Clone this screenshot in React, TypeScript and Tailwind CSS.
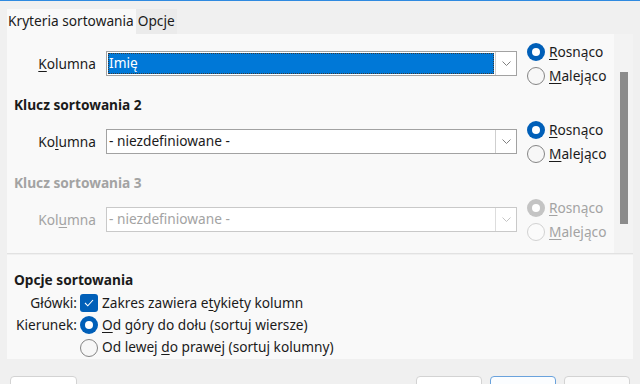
import React from 'react';

const FONT = { fontFamily: '"Noto Sans", "Liberation Sans", sans-serif' };

// underline one letter (mnemonic)
function Mn({ pre = '', key_, post = '' }: { pre?: string; key_: string; post?: string }) {
  return (
    <>
      {pre}
      <span className="underline underline-offset-2 decoration-1">{key_}</span>
      {post}
    </>
  );
}

function Radio({ checked, disabled, children }: { checked?: boolean; disabled?: boolean; children: React.ReactNode }) {
  let circle;
  if (checked) {
    circle = (
      <span className={`w-[18px] h-[18px] rounded-full flex items-center justify-center ${disabled ? 'bg-[#c4c4c4]' : 'bg-[#005fb8]'}`}>
        <span className="w-[8px] h-[8px] rounded-full bg-white" />
      </span>
    );
  } else {
    circle = (
      <span
        className={`w-[18px] h-[18px] rounded-full border ${disabled ? 'border-[#d2d2d2] bg-[#fbfbfb]' : 'border-[#858585] bg-[#f7f7f7]'}`}
      />
    );
  }
  return (
    <div className={`flex items-center h-[24px] gap-[4px] whitespace-nowrap ${disabled ? 'text-[#a3a3a3]' : 'text-[#1b1b1b]'}`}>
      {circle}
      <span>{children}</span>
    </div>
  );
}

function Select({ value, focused, disabled }: { value: string; focused?: boolean; disabled?: boolean }) {
  return (
    <div className={`w-[411px] h-[25px] flex border bg-white ${disabled ? 'border-[#c9c9c9]' : 'border-[#a2a2a2]'}`}>
      <div className="flex-1 p-[1px]">
        <div
          className={`h-full flex items-center pl-[1px] ${
            focused ? 'bg-[#0078d7] text-white outline-1 outline-dotted outline-[#3a3a3a] -outline-offset-1' : disabled ? 'text-[#a3a3a3]' : 'text-[#1b1b1b]'
          }`}
        >
          {value}
        </div>
      </div>
      <div className={`w-[21px] flex items-center justify-center border-l ${disabled ? 'border-[#dddddd]' : 'border-[#cfcfcf]'}`}>
        <svg width="9" height="5" viewBox="0 0 9 5" fill="none">
          <path d="M0.5 0.5 L4.5 4.5 L8.5 0.5" stroke={disabled ? '#c4c4c4' : '#808080'} strokeWidth="1" />
        </svg>
      </div>
    </div>
  );
}

function SortRow({ label, value, focused, disabled }: { label: React.ReactNode; value: string; focused?: boolean; disabled?: boolean }) {
  return (
    <div className="flex items-center h-[50px]">
      <div className={`w-[89px] text-right ${disabled ? 'text-[#a3a3a3]' : 'text-[#1b1b1b]'}`}>{label}</div>
      <div className="ml-[10px] -mt-[2px]">
        <Select value={value} focused={focused} disabled={disabled} />
      </div>
      <div className="ml-[10px] flex flex-col">
        <Radio checked disabled={disabled}>
          <Mn key_="R" post="osnąco" />
        </Radio>
        <Radio disabled={disabled}>
          <Mn key_="M" post="alejąco" />
        </Radio>
      </div>
    </div>
  );
}

function Heading({ children, disabled }: { children: React.ReactNode; disabled?: boolean }) {
  return (
    <div className={`mt-[6px] mb-[2px] h-[20px] flex items-center pl-[7px] font-bold ${disabled ? 'text-[#a3a3a3]' : 'text-[#1b1b1b]'}`}>
      {children}
    </div>
  );
}

export default function App() {
  return (
    <div className="w-[640px] h-[384px] bg-[#f0f0f0] overflow-hidden text-[13.7px]" style={FONT}>
      <div className="h-[1px] bg-[#2f8ae0]" />
      {/* tabs */}
      <div className="flex pl-[7px] pt-[8px] whitespace-nowrap">
        <div className="h-[25px] bg-[#f9f9f9] flex items-center pl-[1px] pr-[2px] text-[#1b1b1b]">Kryteria sortowania</div>
        <div className="h-[25px] bg-[#ebebeb] flex items-center px-[2px] text-[#1b1b1b]">Opcje</div>
      </div>

      {/* sort keys panel */}
      <div className="mx-[7px] h-[220px] bg-[#f9f9f9] flex border-b border-[#e2e2e2]">
        <div className="flex-1 pt-[5px]">
          <SortRow label={<Mn key_="K" post="olumna" />} value="Imię" focused />
          <Heading>Klucz sortowania 2</Heading>
          <SortRow label={<Mn pre="Ko" key_="l" post="umna" />} value="- niezdefiniowane -" />
          <Heading disabled>Klucz sortowania 3</Heading>
          <SortRow label={<Mn pre="Kol" key_="u" post="mna" />} value="- niezdefiniowane -" disabled />
        </div>
        <div className="w-[19px] bg-[#f3f3f3] pt-[38px] pl-[6px]">
          <div className="w-[8px] h-[152px] bg-[#8b8b8b]" />
        </div>
      </div>

      {/* options panel */}
      <div className="mx-[7px] mt-[1px] h-[104px] bg-[#f9f9f9] text-[#1b1b1b] pt-[15px]">
        <div className="h-[20px] flex items-center pl-[7px] font-bold">Opcje sortowania</div>
        <div className="flex items-center h-[22px] mt-[2px]">
          <div className="w-[70px] text-right">Główki:</div>
          <div className="ml-[3px] w-[18px] h-[18px] rounded-[3px] bg-[#005fb8] flex items-center justify-center">
            <svg width="10" height="8" viewBox="0 0 10 8" fill="none">
              <path d="M1 4 L3.8 6.8 L9 1" stroke="#ffffff" strokeWidth="1.1" />
            </svg>
          </div>
          <span className="ml-[4px]">
            <Mn pre="Zakres zawiera e" key_="t" post="ykiety kolumn" />
          </span>
        </div>
        <div className="flex items-center h-[22px]">
          <div className="w-[70px] text-right">Kierunek:</div>
          <div className="ml-[3px]">
            <Radio checked>
              <Mn key_="O" post="d góry do dołu (sortuj wiersze)" />
            </Radio>
          </div>
        </div>
        <div className="flex items-center h-[23px]">
          <div className="ml-[73px]">
            <Radio>
              <Mn pre="Od lewej " key_="d" post="o prawej (sortuj kolumny)" />
            </Radio>
          </div>
        </div>
      </div>

      {/* buttons */}
      <div className="flex mt-[17px] px-[10px]">
        <div className="w-[67px] h-[28px] bg-white border border-[#d3d3d3] rounded-[4px]" />
        <div className="flex-1" />
        <div className="w-[66px] h-[28px] bg-white border border-[#d3d3d3] rounded-[4px]" />
        <div className="ml-[8px] w-[66px] h-[28px] bg-[#fbfdff] border border-[#6aa2dc] rounded-[4px]" />
        <div className="ml-[8px] w-[66px] h-[28px] bg-[#fbfbfb] border border-[#d3d3d3] rounded-[4px]" />
      </div>
    </div>
  );
}
